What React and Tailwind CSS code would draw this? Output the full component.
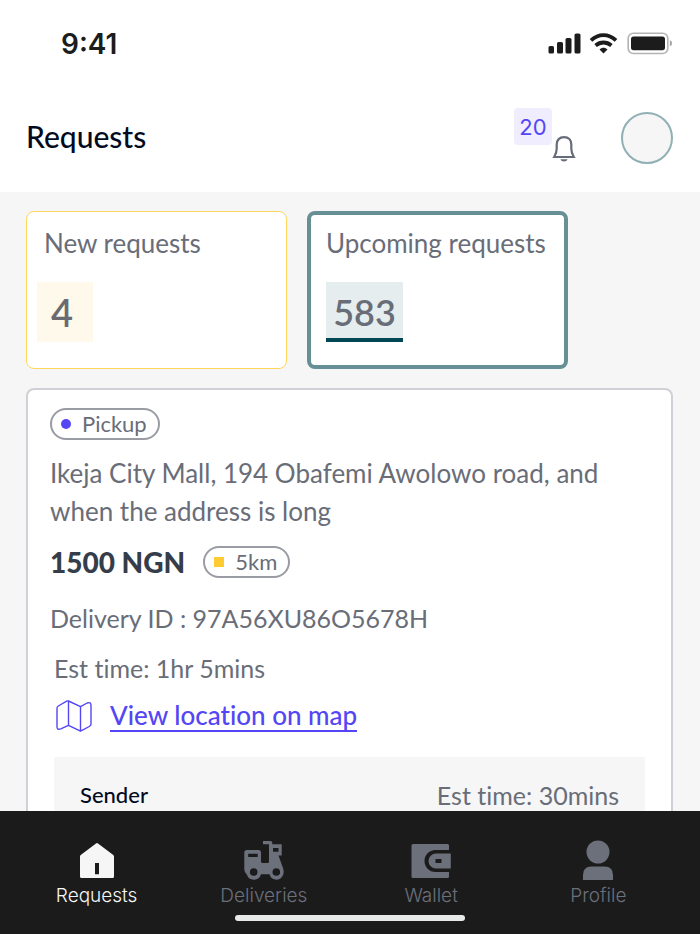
import React from "react";

function StatusBar() {
  return (
    <div className="flex h-[88px] items-center justify-between pl-[61px] pr-[26px] text-[#1c1c1c]">
      <span className="text-[28px] leading-8 font-semibold">9:41</span>
      <svg width="126" height="24" viewBox="0 0 126 24" fill="currentColor" role="img" aria-label="Signal, Wi-Fi and battery">
        <rect x="0.500" y="14" width="5.500" height="7.500" rx="1.600" />
        <rect x="9" y="10" width="6" height="11.500" rx="1.600" />
        <rect x="17.500" y="6" width="6" height="15.500" rx="1.600" />
        <rect x="26.500" y="1.500" width="6" height="20" rx="1.600" />
        <g fill="none" stroke="currentColor" strokeWidth="3.800">
          <path d="M43 8.300C50.500 1.400 60.500 1.400 68 8.300" />
          <path d="M47.600 13.500C52.300 9.500 58.700 9.500 63.400 13.500" />
        </g>
        <path d="M51.500 17.400C54 15.300 57 15.300 59.500 17.400L55.500 21.500Z" />
        <rect x="80.200" y="1.300" width="39.600" height="20.200" rx="5" fill="none" stroke="#b4b4b4" strokeWidth="1.600" />
        <rect x="83" y="4.500" width="34" height="13.700" rx="2.600" />
        <path d="M121.800 8.200C124.800 8.800 124.800 13.600 121.800 14.200Z" fill="#a8a8a8" />
      </svg>
    </div>
  );
}

function BellIcon() {
  return (
    <svg width="24" height="28" viewBox="0 0 24 28" fill="none" stroke="#666c78" strokeWidth="2.200">
      <path d="M2.200 22C4 19 4.700 16.500 4.700 13.500V9.500C4.700 5 7.500 2.100 12 2.100S19.300 5 19.300 9.500V13.500C19.300 16.500 20 19 21.800 22Z" />
      <path d="M8.500 24.300H15.500C14.800 27.300 9.200 27.300 8.500 24.300Z" fill="#666c78" stroke="none" />
    </svg>
  );
}

function Header() {
  return (
    <header className="h-[192px] shrink-0 bg-white">
      <StatusBar />
      <div className="mt-5 flex h-14 items-center justify-between pl-[26px] pr-[27px]">
        <h1 className="font-['Lato',sans-serif] text-[30px] leading-9 font-medium text-[#030b1f]">Requests</h1>
        <div className="flex h-14 items-start gap-[45px]">
          <button type="button" aria-label="20 notifications" className="flex items-start">
            <span className="flex h-[37px] w-[38px] items-center justify-center rounded-sm bg-[#f0edfe] text-[22px] leading-7 text-[#5446f5]">20</span>
            <span className="pt-[27px]"><BellIcon /></span>
          </button>
          <button type="button" aria-label="Account" className="size-[52px] self-end rounded-full border-2 border-[#91b0b5] bg-[#f6f6f6]" />
        </div>
      </div>
    </header>
  );
}

function Pill({ children, marker }) {
  return (
    <span className="inline-flex h-8 items-center gap-[11px] rounded-full border-2 border-[#9a9ca3] px-[9px] pr-[11px] text-[22px] leading-7">
      {marker}
      {children}
    </span>
  );
}

function MapIcon() {
  return (
    <svg width="36" height="32" viewBox="0 0 36 32" fill="none" stroke="#5446f5" strokeWidth="1.400" strokeLinejoin="round">
      <path d="M12.500 1Q11.600 .7 10.700 1.200L2.300 6Q1 6.800 1 8.300V26.500Q1 30.400 4.800 28.900L12.500 25.300L24.500 31.100L33.300 26.500Q35 25.600 35 24V5.500Q35 1.500 31.200 3L24.500 6.700Z" />
      <path d="M12.500 1V25.300M24.500 6.700V31.100" />
    </svg>
  );
}

function DeliveryCard() {
  return (
    <article className="rounded-lg border-2 border-[#d0d1d6] bg-white px-[22px] pt-[18px] text-[26px] leading-[38px] text-[#696d78]">
      <div className="flex">
        <Pill marker={<i className="size-[10px] rounded-full bg-[#5446f5]" />}>Pickup</Pill>
      </div>
      <p className="pt-[14px]">Ikeja City Mall, 194 Obafemi Awolowo road, and when the address is long</p>
      <div className="flex items-center gap-[18px] pt-[13px]">
        <strong className="text-[28px] font-black text-[#353d4a]">1500 NGN</strong>
        <Pill marker={<i className="size-[10px] bg-[#ffca32]" />}>5km</Pill>
      </div>
      <p className="pt-[18px] text-[25px]">Delivery ID : 97A56XU86O5678H</p>
      <div className="px-1 pt-3">
        <p className="text-[25px]">Est time: 1hr 5mins</p>
        <a href="#map" className="flex items-center gap-[18px] pt-[13px] pl-[2px] text-[#5446f5]">
          <MapIcon />
          <span className="border-b-2 border-[#5446f5] leading-[30px] font-medium">View location on map</span>
        </a>
        <section className="mt-[25px] flex h-[180px] items-start justify-between bg-[#f6f6f6] px-[26px] pt-[19px]">
          <h2 className="text-[22px] font-medium text-[#030b1f]">Sender</h2>
          <p className="text-[25px]">Est time: 30mins</p>
        </section>
      </div>
    </article>
  );
}

function HomeIcon() {
  return (
    <svg width="40" height="40" viewBox="0 0 40 40" fill="currentColor">
      <path fillRule="evenodd" d="M19 3.400Q20 2.500 21 3.400L36.300 15Q37 15.500 37 16.500V36.500Q37 38 35.500 38H4.500Q3 38 3 36.500V16.500Q3 15.500 3.700 15ZM18 23V34.200H22V23Z" />
    </svg>
  );
}

function ScooterIcon() {
  return (
    <svg width="40" height="40" viewBox="0 0 40 40" fill="currentColor">
      <path fillRule="evenodd" d="M19 1H26.500Q28.300 1 28.300 2.800V4.300H37.700V15.500H34.500L39 28C41 33 38.500 39.700 32.500 39.700Q27 39.700 25.500 34.300H17Q15.500 39.700 9.800 39.700Q4.500 39.700 2.800 34.500Q.3 32.500 .3 29.500V12.500Q.3 10 2.800 10H14.500Q17 10 17 12.500V21.500Q17 23 18.500 23H23.500Q25 23 25 21.500V4.300H19ZM4.200 13.700V17H13.700V13.700ZM29 8V11.700H34.500V8ZM9.700 28.200A3.800 3.800 0 1 0 9.700 35.800A3.800 3.800 0 1 0 9.700 28.200ZM32.300 28.200A3.800 3.800 0 1 0 32.300 35.800A3.800 3.800 0 1 0 32.300 28.200Z" />
    </svg>
  );
}

function WalletIcon() {
  return (
    <svg width="40" height="40" viewBox="0 0 40 40" fill="currentColor">
      <path d="M1.500 4H36.500Q38 4 38 5.500V10H24.500C18 10 13.500 15 13.500 21S18 32 24.500 32H38V36.500Q38 38 36.500 38H2Q.5 38 .5 36.500V5.500Q.5 4 2 4Z" />
      <path fillRule="evenodd" d="M25 13.500H39.800V28.500H25A7.500 7.500 0 0 1 25 13.500ZM24.500 19V23H30.500V19Z" />
    </svg>
  );
}

function ProfileIcon() {
  return (
    <svg width="40" height="40" viewBox="0 0 40 40" fill="currentColor">
      <circle cx="20" cy="12" r="11.500" />
      <path d="M5 40V35Q5 26.500 13.500 26.500H26.500Q35 26.500 35 35V40Z" />
    </svg>
  );
}

const tabs = [
  { label: "Requests", Icon: HomeIcon, active: true },
  { label: "Deliveries", Icon: ScooterIcon },
  { label: "Wallet", Icon: WalletIcon },
  { label: "Profile", Icon: ProfileIcon },
];

export default function App() {
  return (
    <div className="flex h-screen flex-col overflow-hidden bg-[#f6f6f6] font-['Inter',sans-serif]">
      <Header />
      <main className="min-h-0 flex-1 overflow-hidden pr-[27px] pl-[26px] pt-[19px] font-['Lato',sans-serif] [font-variant-ligatures:none]">
        <div className="flex gap-5 pb-[19px] text-[26px] leading-8 text-[#696d78]">
          <button type="button" className="flex h-[158px] w-[261px] flex-col items-start rounded-lg border border-[#fdd75b] bg-white px-[10px] pt-[15px]">
            <span className="px-[7px]">New requests</span>
            <span className="mt-[23px] flex h-[60px] w-14 items-center bg-[#fff9eb] px-[14px] text-[38px] font-semibold text-[#696b70]">4</span>
          </button>
          <button type="button" className="flex h-[158px] w-[261px] flex-col items-start rounded-lg border-4 border-[#668f96] bg-white px-[15px] pt-3">
            <span className="whitespace-nowrap">Upcoming requests</span>
            <span className="mt-[23px] flex h-[60px] w-[77px] items-center justify-center border-b-4 border-[#024755] bg-[#e5edef] pt-1 text-[36px] font-semibold">583</span>
          </button>
        </div>
        <DeliveryCard />
      </main>
      <footer className="h-[123px] shrink-0 bg-[#1b1b1b] pt-[29px]">
        <nav className="grid grid-cols-4 pl-[13px] pr-[18px]">
          {tabs.map(({ label, Icon, active }) => (
            <a
              key={label}
              href={"#" + label.toLowerCase()}
              className={active ? "flex flex-col items-center gap-1 text-[#f6f6f6]" : "flex flex-col items-center gap-1 text-[#6b707b]"}
            >
              <Icon />
              <span className="text-[19px] leading-6 font-light">{label}</span>
            </a>
          ))}
        </nav>
        <div className="mx-auto mt-[7px] h-[6px] w-[230px] rounded-full bg-[#e8eaea]" />
      </footer>
    </div>
  );
}
